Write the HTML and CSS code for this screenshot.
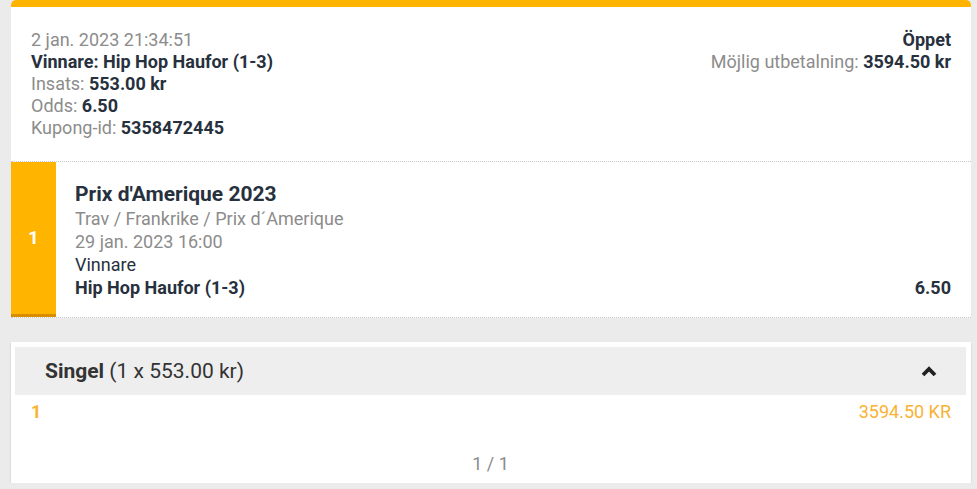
FILE: index.html
```html
<!DOCTYPE html>
<html>
<head>
  <title>Kupong</title>
  <link rel="stylesheet" href="styles.css">
</head>
<body>
  <div class="coupon">
    <div class="summary">
      <div class="summary-left">
        <div class="muted">2 jan. 2023 21:34:51</div>
        <div class="strong">Vinnare: Hip Hop Haufor (1-3)</div>
        <div class="muted">Insats: <b>553.00 kr</b></div>
        <div class="muted">Odds: <b>6.50</b></div>
        <div class="muted">Kupong-id: <b>5358472445</b></div>
      </div>
      <div class="summary-right">
        <div class="strong">Öppet</div>
        <div class="muted">Möjlig utbetalning: <b>3594.50 kr</b></div>
      </div>
    </div>

    <div class="leg">
      <div class="leg-num">1</div>
      <div class="leg-body">
        <div class="leg-title">Prix d'Amerique 2023</div>
        <div class="muted">Trav / Frankrike / Prix d´Amerique</div>
        <div class="muted">29 jan. 2023 16:00</div>
        <div>Vinnare</div>
        <div class="leg-pick">
          <span>Hip Hop Haufor (1-3)</span>
          <span>6.50</span>
        </div>
      </div>
    </div>
  </div>

  <div class="system">
    <div class="system-head">
      <div><b>Singel</b> (1 x 553.00 kr)</div>
      <svg class="chevron" width="16" height="12" viewBox="0 0 16 12">
        <polyline points="2,10 8,4 14,10" fill="none" stroke="#222" stroke-width="3.8" stroke-linejoin="miter"/>
      </svg>
    </div>
    <div class="system-row">
      <span>1</span>
      <span>3594.50 KR</span>
    </div>
    <div class="pager">1 / 1</div>
  </div>
</body>
</html>
```

FILE: styles.css
```css
body {
  margin: 0;
  padding: 0 6px 0 11px;
  background-color: #ebebeb;
  font-family: Roboto, 'Noto Sans', sans-serif;
  font-size: 18px;
  line-height: 22px;
  color: #27313d;
}
b {
  font-weight: 700;
  color: #27313d;
}
.muted {
  color: #8c8c8c;
}
.strong {
  font-weight: 700;
}
.coupon {
  background-color: #fff;
  border-top: 7px solid #ffb400;
  border-radius: 5px 5px 0 0;
}
.summary {
  display: flex;
  justify-content: space-between;
  padding: 22px 20px 22px;
  border-bottom: 1px dotted #c8c8c8;
}
.summary-right {
  text-align: right;
}
.leg {
  display: flex;
  border-bottom: 1px dotted #c8c8c8;
}
.leg-num {
  width: 45px;
  flex-shrink: 0;
  display: flex;
  align-items: center;
  justify-content: center;
  background-color: #ffb400;
  border-bottom: 3px solid #d98e00;
  color: #fff;
  font-weight: 700;
  font-size: 19px;
}
.leg-body {
  flex: 1;
  padding: 19px 20px 18px 19px;
  line-height: 23px;
}
.leg-title {
  font-size: 21px;
  font-weight: 700;
  line-height: 26px;
}
.leg-pick {
  display: flex;
  justify-content: space-between;
  font-weight: 700;
}
.system {
  margin-top: 24px;
  background-color: #fff;
  padding: 5px 5px 8px 4px;
  box-shadow: 0 1px 2px rgba(0, 0, 0, 0.15);
}
.system-head {
  display: flex;
  justify-content: space-between;
  align-items: center;
  height: 48px;
  padding: 0 29px 0 30px;
  background-color: #eeeeee;
  font-size: 21px;
  color: #333;
}
.system-head b {
  color: #333;
}
.system-row {
  display: flex;
  justify-content: space-between;
  padding: 6px 15px 0 16px;
  color: #f9b233;
}
.system-row span:first-child {
  font-weight: 700;
}
.pager {
  margin-top: 30px;
  text-align: center;
  color: #8c8c8c;
}
```
